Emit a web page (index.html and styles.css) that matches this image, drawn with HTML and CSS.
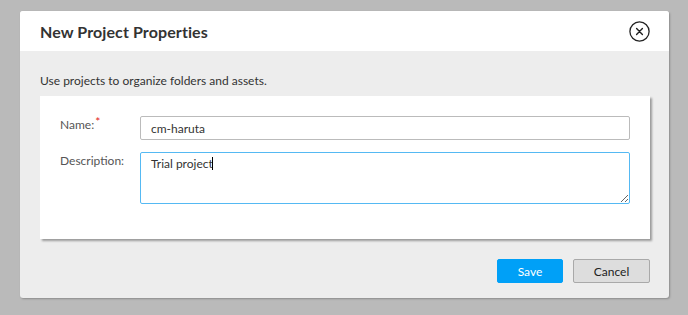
FILE: index.html
```html
<!DOCTYPE html>
<html>
<head>
<meta charset="utf-8">
<link rel="stylesheet" href="styles.css">
</head>
<body>
<div class="dialog">
  <div class="header">
    <h1 class="title">New Project Properties</h1>
    <button class="close" aria-label="Close">
      <svg width="21" height="21" viewBox="0 0 21 21"><circle cx="10.5" cy="10.5" r="9.6" fill="none" stroke="#222" stroke-width="1.3"/><path d="M7.6 7.6 L13.4 13.4 M13.4 7.6 L7.6 13.4" stroke="#222" stroke-width="1.4" stroke-linecap="round"/></svg>
    </button>
  </div>
  <div class="body">
    <p class="intro">Use projects to organize folders and assets.</p>
    <div class="card">
      <div class="row">
        <label class="label">Name:<span class="req">*</span></label>
        <input class="input" type="text" value="cm-haruta">
      </div>
      <div class="row">
        <label class="label">Description:</label>
        <div class="ta-wrap">
          <textarea class="textarea">Trial project</textarea>
          <span class="caret"></span>
        </div>
      </div>
    </div>
  </div>
  <div class="footer">
    <button class="btn btn-primary">Save</button>
    <button class="btn btn-secondary">Cancel</button>
  </div>
</div>
</body>
</html>
```
FILE: styles.css
```css
* { box-sizing: border-box; }
html, body { margin: 0; padding: 0; }
body {
  background: #bababa;
  width: 688px;
  height: 315px;
  overflow: hidden;
  font-family: "Lato", "Noto Sans", sans-serif;
  color: #333;
}
.dialog {
  margin: 11px 0 0 20px;
  width: 649px;
  height: 287px;
  background: #ededed;
  border-radius: 3px;
  box-shadow: 1px 1px 2px rgba(0,0,0,0.25);
  overflow: hidden;
  display: flex;
  flex-direction: column;
}
.header {
  height: 40px;
  background: #fff;
  display: flex;
  align-items: center;
  justify-content: space-between;
  padding: 0 19px 0 20px;
}
.title {
  margin: 0;
  font-size: 16px;
  font-weight: 700;
  color: #333;
  letter-spacing: 0.1px;
}
.close {
  border: 0;
  background: none;
  padding: 0;
  width: 21px;
  height: 21px;
  display: flex;
  margin-top: 1px;
}
.body {
  padding: 0 19px 0 20px;
}
.intro {
  margin: 0;
  height: 45px;
  padding-top: 22px;
  font-size: 12px;
  color: #333;
}
.card {
  background: #fff;
  height: 143px;
  padding: 20px 20px 0 20px;
  box-shadow: 2px 2px 2px rgba(0,0,0,0.35);
  display: flex;
  flex-direction: column;
  gap: 12px;
}
.row {
  display: flex;
  align-items: flex-start;
}
.label {
  width: 80px;
  font-size: 12px;
  color: #555;
  padding-top: 1px;
}
.req {
  color: #e3241b;
  font-size: 12px;
  position: relative;
  top: -3px;
  margin-left: 1px;
}
.input {
  width: 490px;
  height: 24px;
  border: 1px solid #bbb;
  border-radius: 2px;
  padding: 0 10px;
  font-family: inherit;
  font-size: 12px;
  color: #333;
  outline: none;
  background: #fff;
}
.ta-wrap {
  position: relative;
  width: 490px;
  height: 52px;
}
.textarea {
  display: block;
  width: 100%;
  height: 100%;
  border: 1px solid #55b9f3;
  border-radius: 2px;
  padding: 3px 10px;
  font-family: inherit;
  font-size: 12px;
  color: #333;
  outline: none;
  resize: both;
  background: #fff;
}
.caret {
  position: absolute;
  left: 72px;
  top: 5px;
  width: 1px;
  height: 13px;
  background: #000;
}
.footer {
  display: flex;
  justify-content: flex-end;
  gap: 10px;
  padding: 20px 19px 0 0;
}
.btn {
  height: 24px;
  font-family: inherit;
  font-size: 12px;
  border-radius: 2px;
  padding: 0;
}
.btn-primary {
  width: 66px;
  background: #00a0f7;
  border: 1px solid #00a0f7;
  color: #fff;
}
.btn-secondary {
  width: 77px;
  background: #dddddd;
  border: 1px solid #a9a9a9;
  color: #222;
}
```
